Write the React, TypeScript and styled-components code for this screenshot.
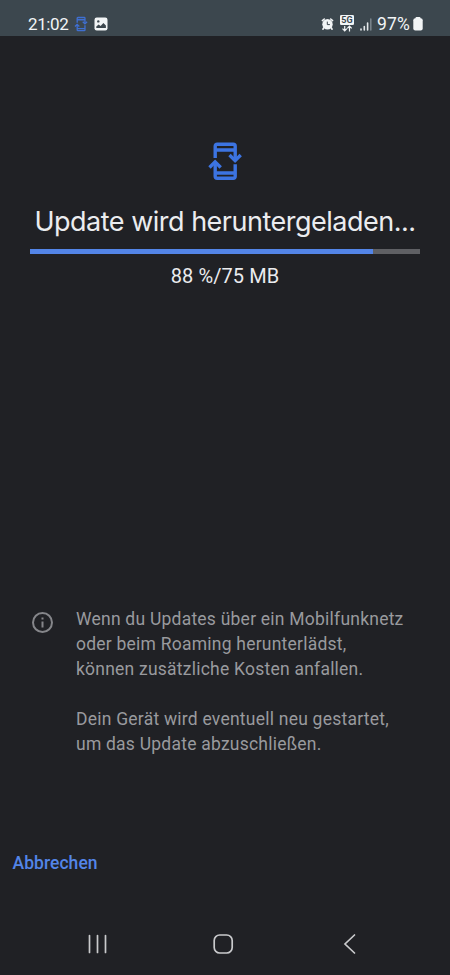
import React from "react";
import styled, { createGlobalStyle } from "styled-components";

const GlobalStyle = createGlobalStyle`
  * { box-sizing: border-box; }
  body { margin: 0; background: #202125; }
`;

const Screen = styled.div`
  width: 450px;
  height: 975px;
  display: flex;
  flex-direction: column;
  overflow: hidden;
  background: #202125;
  font-family: Roboto, "Liberation Sans", sans-serif;
`;

const StatusBar = styled.header`
  height: 36px;
  flex: none;
  display: flex;
  justify-content: space-between;
  align-items: flex-start;
  padding: 14px 27px 0 28px;
  background: #3c474e;
  color: #f2f5f6;
`;

const StatusGroup = styled.div<{ $gap: number }>`
  display: flex;
  align-items: center;
  gap: ${(p) => p.$gap}px;
  height: 20px;
`;

const StatusText = styled.span<{ $size: number; $spacing: number }>`
  font-size: ${(p) => p.$size}px;
  line-height: 20px;
  letter-spacing: ${(p) => p.$spacing}px;
`;

const Icon = styled.svg`
  display: block;
  flex: none;
`;

const Progress = styled.main`
  display: flex;
  flex-direction: column;
  align-items: center;
  padding: 105px 30px 0;
  height: 571px;
  flex: none;
`;

const Title = styled.h1`
  margin: 22px 0 0;
  height: 36px;
  font-family: Inter, Roboto, sans-serif;
  font-size: 27px;
  font-weight: 400;
  line-height: 37px;
  letter-spacing: -0.5px;
  white-space: nowrap;
  color: #ebecef;
`;

const Track = styled.div`
  width: 390px;
  height: 5px;
  margin-top: 10px;
  background: #5f6064;
`;

const Fill = styled.div`
  height: 100%;
  background: #5385e8;
`;

const Amount = styled.div`
  margin-top: 10px;
  font-size: 20px;
  line-height: 24px;
  letter-spacing: 0.1px;
  color: #ebecef;
`;

const Info = styled.section`
  display: flex;
  align-items: flex-start;
  gap: 21px;
  padding: 0 30px;
  height: 241px;
  flex: none;
`;

const InfoIcon = styled(Icon)`
  margin-top: 3px;
`;

const InfoText = styled.div`
  display: flex;
  flex-direction: column;
  gap: 25px;
`;

const Paragraph = styled.p`
  margin: 0;
  font-size: 17.5px;
  line-height: 25px;
  letter-spacing: 0.23px;
  white-space: pre-line;
  color: #999a9e;
`;

const Actions = styled.footer`
  flex: 1;
  padding-left: 12.5px;
`;

const CancelButton = styled.button`
  border: 0;
  padding: 0;
  background: none;
  font: 500 17.5px/30px Roboto, sans-serif;
  letter-spacing: 0.05px;
  color: #5385e8;
`;

const NavBar = styled.nav`
  height: 62px;
  flex: none;
  display: flex;
  gap: 104px;
  padding: 20px 0 0 86px;
`;

const HomeIcon = styled(Icon)`
  margin-right: 5px;
`;

function UpdateIcon({ width, height, color }: { width: number; height: number; color: string }) {
  return (
    <Icon width={width} height={height} viewBox="0 0 36 40" fill="none" stroke={color} strokeWidth="3.4">
      <path d="M8.2 17V5.2q0-2 2-2h16q2 0 2 2V19M8.2 9h20M28.2 23.3v11.9q0 2-2 2h-16q-2 0-2-2V22M8.2 32h20" />
      <path d="M22.5 14l5.6 5.6 5.6-5.6M2.5 26.5l5.6-5.6 5.6 5.6" />
    </Icon>
  );
}

function PictureIcon() {
  return (
    <Icon width="14" height="14" viewBox="0 0 14 14">
      <rect x=".5" y=".5" width="13" height="13" rx="2.2" fill="#f2f5f6" />
      <circle cx="4.3" cy="4.4" r="1.2" fill="#3c474e" />
      <path d="M2.3 10.9V9.6l2.3-2.1 2 1.5 2.8-3 2.5 2.5v2.4z" fill="#3c474e" />
    </Icon>
  );
}

function AlarmIcon() {
  return (
    <Icon width="13" height="14" viewBox="0 0 13 14">
      <path d="M1.4 3.6L3.3 2M11.6 3.6L9.7 2M2.8 10.8l-.9 1.4M10.2 10.8l.9 1.4" stroke="#f2f5f6" strokeWidth="1.6" strokeLinecap="round" />
      <circle cx="6.5" cy="7.2" r="5.2" fill="#f2f5f6" />
      <path d="M6.3 4.6v3h2.6" fill="none" stroke="#3c474e" strokeWidth="1" />
    </Icon>
  );
}

function NetworkIcon() {
  return (
    <Icon width="14" height="18" viewBox="0 0 14 18">
      <rect width="14" height="10" rx="1.3" fill="#f2f5f6" />
      <text x="7" y="8.2" textAnchor="middle" fontFamily="Roboto, sans-serif" fontSize="9" fontWeight="700" fill="#3c474e">5G</text>
      <path d="M4.7 11v4.6M2.5 13.6l2.2 2.2 2.2-2.2M9.5 16.5v-5M7.3 13.4l2.2-2.2 2.2 2.2" fill="none" stroke="#f2f5f6" strokeWidth="1.2" />
    </Icon>
  );
}

function SignalIcon() {
  return (
    <Icon width="12" height="13" viewBox="0 0 12 13" strokeWidth="1.6" strokeLinecap="round" stroke="#e4e8ea">
      <path d="M1 11v1M4.3 8.5V12M7.6 5v7" />
      <path d="M10.8 1v11" stroke="#77828a" />
    </Icon>
  );
}

function BatteryIcon() {
  return (
    <Icon width="10" height="14" viewBox="0 0 10 14" fill="#f2f5f6">
      <rect x="2.5" y="0" width="5" height="3" rx="1" />
      <rect x=".3" y="1.3" width="9.4" height="12.3" rx="2" />
    </Icon>
  );
}

const SignalGroup = styled(StatusGroup)`
  margin-right: 2px;
`;

const percent = 88;

export default function App() {
  return (
    <>
      <GlobalStyle />
      <Screen>
        <StatusBar>
          <StatusGroup $gap={6}>
            <StatusText $size={17} $spacing={-0.4}>21:02</StatusText>
            <UpdateIcon width={14} height={16} color="#3f6fd0" />
            <PictureIcon />
          </StatusGroup>
          <StatusGroup $gap={3}>
            <SignalGroup $gap={6}>
              <AlarmIcon />
              <NetworkIcon />
              <SignalIcon />
            </SignalGroup>
            <StatusText $size={17.5} $spacing={0.2}>97%</StatusText>
            <BatteryIcon />
          </StatusGroup>
        </StatusBar>
        <Progress>
          <UpdateIcon width={36} height={40} color="#3c74e2" />
          <Title>Update wird heruntergeladen...</Title>
          <Track>
            <Fill style={{ width: `${percent}%` }} />
          </Track>
          <Amount>{percent} %/75 MB</Amount>
        </Progress>
        <Info>
          <InfoIcon width="25" height="25" viewBox="0 0 25 25" fill="none" stroke="#85868a" strokeWidth="2">
            <circle cx="12.5" cy="12.5" r="9.5" />
            <path d="M12.5 11.5v6M12.5 7.6v2" />
          </InfoIcon>
          <InfoText>
            <Paragraph>
              {"Wenn du Updates über ein Mobilfunknetz\noder beim Roaming herunterlädst,\nkönnen zusätzliche Kosten anfallen."}
            </Paragraph>
            <Paragraph>{"Dein Gerät wird eventuell neu gestartet,\num das Update abzuschließen."}</Paragraph>
          </InfoText>
        </Info>
        <Actions>
          <CancelButton>Abbrechen</CancelButton>
        </Actions>
        <NavBar>
          <Icon width="22" height="22" viewBox="0 0 22 22" stroke="#c9cacc" strokeWidth="1.7" strokeLinecap="round">
            <path d="M3.5 2.5v17M11.5 2.5v17M19.5 2.5v17" />
          </Icon>
          <HomeIcon width="22" height="22" viewBox="0 0 22 22" fill="none" stroke="#c9cacc" strokeWidth="1.7">
            <rect x="2.2" y="2" width="18" height="18" rx="5.5" />
          </HomeIcon>
          <Icon width="14" height="22" viewBox="0 0 14 22" fill="none" stroke="#c9cacc" strokeWidth="1.7" strokeLinecap="round">
            <path d="M11.5 2L2 11l9.5 9" />
          </Icon>
        </NavBar>
      </Screen>
    </>
  );
}
